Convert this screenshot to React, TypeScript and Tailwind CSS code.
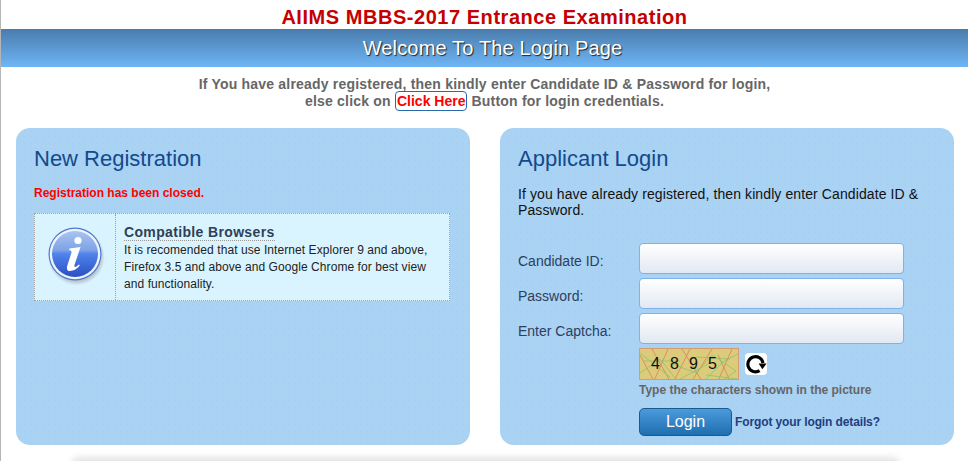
const dots = 'bg-[#a9d2f3] bg-[radial-gradient(#a0ccf5_0.5px,transparent_0.8px)] bg-[length:6px_6px]'

function InfoIcon() {
  return (
    <svg width="58" height="60" viewBox="0 0 58 60">
      <defs>
        <radialGradient id="sh" cx="0.5" cy="0.5" r="0.5">
          <stop offset="0.8" stopColor="#8a8a8a" stopOpacity="0.55" />
          <stop offset="1" stopColor="#8a8a8a" stopOpacity="0" />
        </radialGradient>
        <linearGradient id="disc" x1="0" y1="0" x2="0" y2="1">
          <stop offset="0" stopColor="#a9c4ee" />
          <stop offset="0.42" stopColor="#7da2e6" />
          <stop offset="0.5" stopColor="#4f83ea" />
          <stop offset="1" stopColor="#2b4fc4" />
        </linearGradient>
      </defs>
      <ellipse cx="29.5" cy="31" rx="28.5" ry="28.5" fill="url(#sh)" />
      <circle cx="28" cy="28" r="26.5" fill="#4f79d0" />
      <circle cx="28" cy="28" r="25.3" fill="#eef4fc" />
      <circle cx="28" cy="28" r="23" fill="url(#disc)" />
      <circle cx="31" cy="14.5" r="3.6" fill="#fff" />
      <path d="M22.5 22.5 L33.5 21 L27.5 39 C27 41 28 41.5 29.5 40.5 L32 38.5 L32.8 39.6 C29.5 43.5 26.5 45 23 45 C20 45 19.5 42.5 20.2 40 L24.5 26.5 C24.8 25 24 24.3 22.2 24 Z" fill="#fff" />
    </svg>
  )
}

function RefreshIcon() {
  return (
    <svg width="22" height="22" viewBox="0 0 22 22" fill="none">
      <path d="M18 10 A7.6 7.6 0 1 0 14.6 17.6" stroke="#000" strokeWidth="3.2" />
      <path d="M13.6 10.6 L21.6 10.6 L17.4 16.2 Z" fill="#000" />
    </svg>
  )
}

function Captcha() {
  return (
    <div className="relative w-[100px] h-[32px] border border-[#d89a70] bg-[#dccb7a] overflow-hidden flex items-center pl-[11px] text-[16px] text-[#111] font-['Liberation_Sans',sans-serif]">
      <svg className="absolute inset-0" width="100" height="32" viewBox="0 0 100 32" fill="none">
        <path d="M0 6 L14 32 M12 0 L30 32 M28 0 L14 32 M50 0 L34 32 M42 0 L62 32 M72 0 L52 32 M78 6 L90 32 M92 0 L78 32" stroke="#d9815c" strokeWidth="0.8" />
        <path d="M0 24 L20 10 L36 30 M30 14 L56 24 L72 6 L96 22 L82 32 M64 32 L84 12 L100 4 M4 12 H40 M56 8 L90 10 M0 4 L30 28 M40 30 L70 14 M66 26 L98 30" stroke="#7fc46a" strokeWidth="0.7" />
      </svg>
      {['4', '8', '9', '5'].map((n) => (
        <span key={n} className="relative w-[19px]">{n}</span>
      ))}
    </div>
  )
}

function Field({ label }: { label: string }) {
  return (
    <div className="flex items-center h-[31px] mb-[4px]">
      <label className="w-[121px] pt-[5px] text-[14px] text-[#2d3f5e]">{label}</label>
      <div className="w-[265px] h-[31px] rounded-[4px] border border-[#7fb2ea] bg-gradient-to-b from-white to-[#e2e8f2]" />
    </div>
  )
}

export default function App() {
  return (
    <div className="relative w-[968px] h-[461px] overflow-hidden bg-white border-l border-[#b5b5b5] font-['Liberation_Sans',Arial,sans-serif]">
      <h1 className="h-[29px] pt-[6px] text-center text-[20px] leading-[23px] font-bold text-[#c40000] tracking-[0.54px]">
        AIIMS MBBS-2017 Entrance Examination
      </h1>
      <div className="h-[38px] flex items-center justify-center pl-[16px] bg-gradient-to-b from-[#4a7cad] to-[#6fb6f6] text-white text-[20px] tracking-[0.16px] [text-shadow:1px_1px_1px_#222]">
        Welcome To The Login Page
      </div>

      <p className="mt-[9px] text-center text-[14px] leading-[17px] font-bold text-[#666] tracking-[0.2px]">
        If You have already registered, then kindly enter Candidate ID &amp; Password for login,
        <br />
        else click on{' '}
        <span className="inline-block h-[20px] -my-[2px] align-baseline border border-[#2a6aa8] rounded-[4px] bg-white px-[1px] leading-[18px] text-[#f00] tracking-normal">Click Here</span>{' '}
        Button for login credentials.
      </p>

      <div className="flex gap-[30px] pl-[15px] mt-[18px]">
        <section className={`w-[454px] h-[317px] rounded-[14px] ${dots} px-[18px] pt-[18px]`}>
          <h2 className="text-[22px] leading-[25px] text-[#134a8c]">New Registration</h2>
          <p className="mt-[15px] text-[12px] leading-[14px] font-bold text-[#f00]">Registration has been closed.</p>
          <div className="mt-[13px] flex h-[88px] w-[416px] bg-[#daf4ff] border border-dotted border-[#a0a0a0]">
            <div className="w-[81px] shrink-0 border-r border-dotted border-[#a0a0a0] pl-[12px] pt-[12px]">
              <InfoIcon />
            </div>
            <div className="pl-[8px] pt-[10px] text-[12px] leading-[17px] text-[#222]">
              <div className="w-fit mb-[1px] font-bold text-[14px] leading-[16px] text-[#2f3f55] tracking-[0.35px] border-b border-dotted border-[#999]">
                Compatible Browsers
              </div>
              <p className="w-[310px] tracking-[0.07px]">
                It is recomended that use Internet Explorer 9 and above, Firefox 3.5 and above and Google Chrome for best view and functionality.
              </p>
            </div>
          </div>
        </section>

        <section className={`w-[454px] h-[317px] rounded-[14px] ${dots} px-[18px] pt-[18px]`}>
          <h2 className="text-[22px] leading-[25px] text-[#134a8c]">Applicant Login</h2>
          <p className="mt-[15px] mb-[25px] w-[420px] text-[14px] leading-[16px] text-[#111] tracking-[0.1px]">
            If you have already registered, then kindly enter Candidate ID &amp; Password.
          </p>
          <Field label="Candidate ID:" />
          <Field label="Password:" />
          <Field label="Enter Captcha:" />
          <div className="ml-[121px]">
            <div className="flex items-center">
              <Captcha />
              <span className="ml-[6px] w-[22px] h-[22px] rounded-[4px] bg-white flex items-center justify-center">
                <RefreshIcon />
              </span>
            </div>
            <p className="mt-[3px] text-[12px] leading-[14px] font-bold text-[#666]">Type the characters shown in the picture</p>
            <div className="flex items-center mt-[11px]">
              <button className="w-[93px] h-[28px] rounded-[5px] border border-[#1c5a8e] bg-gradient-to-b from-[#4b9bdc] to-[#1c6fb0] text-white text-[16px]">
                Login
              </button>
              <a className="ml-[3px] text-[12px] font-bold text-[#1f3f7f] tracking-[-0.12px]">Forgot your login details?</a>
            </div>
          </div>
        </section>
      </div>

      <div className="absolute left-[70px] right-[68px] top-[457px] h-[12px] rounded-t-[8px] bg-[#e4e4e4] blur-[3px]" />
    </div>
  )
}
